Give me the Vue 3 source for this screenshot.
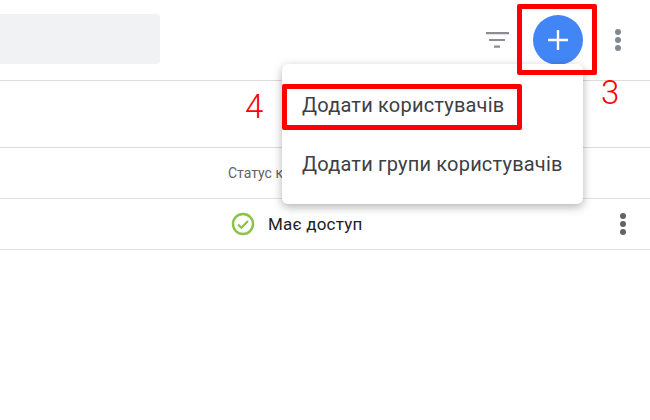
<script setup>
const menuItems = ['Додати користувачів', 'Додати групи користувачів']
</script>

<template>
  <div class="page">
    <header class="toolbar">
      <div class="search"></div>
      <div class="actions">
        <svg class="filter" width="24" height="16" viewBox="0 0 24 16">
          <path d="M0 1.2h23M3 8h16M8 14.6h6" stroke="#8a8d91" stroke-width="2.2" fill="none" />
        </svg>
        <button class="add">
          <svg width="22" height="22" viewBox="0 0 22 22">
            <path d="M11 1v20M1 11h20" stroke="#fff" stroke-width="2.4" fill="none" />
          </svg>
        </button>
        <div class="dots"><i></i><i></i><i></i></div>
      </div>
    </header>
    <div class="band"></div>
    <div class="thead"><span class="th">Статус к</span></div>
    <div class="row">
      <span class="status">
        <svg width="24" height="24" viewBox="0 0 24 24">
          <circle cx="12" cy="12" r="10" stroke="#8bc34a" stroke-width="2.4" fill="none" />
          <path d="M7 12.5l3.4 3.3 6.6-6.8" stroke="#8bc34a" stroke-width="2.2" fill="none" />
        </svg>
        Має доступ
      </span>
      <div class="dots dark"><i></i><i></i><i></i></div>
    </div>

    <ul class="menu">
      <li v-for="item in menuItems" :key="item">{{ item }}</li>
    </ul>

    <div class="mark mark-add"></div>
    <div class="mark mark-item"></div>
    <span class="num num-3">3</span>
    <span class="num num-4">4</span>
  </div>
</template>

<style>
html, body { margin: 0; background: #fff; }
</style>

<style scoped>
.page {
  position: relative;
  width: 650px;
  height: 420px;
  overflow: hidden;
  background: #fff;
  font-family: Roboto, "Noto Sans", sans-serif;
}
.toolbar {
  box-sizing: border-box;
  height: 81px;
  padding-top: 14px;
  display: flex;
  justify-content: space-between;
  align-items: flex-start;
  border-bottom: 1px solid #dcdbe0;
}
.search {
  width: 160px;
  height: 50px;
  background: #f1f2f4;
  border-radius: 0 3px 3px 0;
}
.actions {
  display: flex;
  align-items: center;
  height: 50px;
  margin-top: 1px;
  padding-right: 29px;
}
.filter { margin-right: 23px; }
.add {
  width: 50px;
  height: 50px;
  padding: 0;
  border: 0;
  border-radius: 50%;
  background: #4285f4;
  display: flex;
  align-items: center;
  justify-content: center;
  margin-right: 32px;
}
.dots {
  display: flex;
  flex-direction: column;
  gap: 2px;
}
.dots i {
  width: 6px;
  height: 6px;
  border-radius: 50%;
  background: #7f8a93;
}
.dots.dark i { background: #5f6368; }
.band {
  height: 66px;
  border-bottom: 1px solid #dcdbe0;
}
.thead {
  box-sizing: border-box;
  height: 51px;
  padding: 17px 0 0 228px;
  border-bottom: 1px solid #e0e0e0;
}
.th {
  display: block;
  font-size: 14px;
  color: #5f6368;
  white-space: nowrap;
}
.row {
  box-sizing: border-box;
  height: 51px;
  padding: 0 24px 0 231px;
  display: flex;
  align-items: center;
  justify-content: space-between;
  border-bottom: 1px solid #e0e0e0;
}
.status {
  display: flex;
  align-items: center;
  gap: 13px;
  font-size: 17px;
  letter-spacing: 0.2px;
  color: #202124;
}
.menu {
  position: absolute;
  left: 282px;
  top: 64px;
  width: 301px;
  height: 140px;
  margin: 0;
  padding: 12px 0;
  box-sizing: border-box;
  list-style: none;
  background: #fff;
  border-radius: 6px;
  box-shadow: 0 3px 10px rgba(0, 0, 0, 0.3);
}
.menu li {
  height: 59px;
  padding-left: 20px;
  line-height: 58px;
  font-size: 20px;
  letter-spacing: 0.2px;
  color: #3c4043;
  white-space: nowrap;
}
.mark {
  position: absolute;
  box-sizing: border-box;
  border: 5px solid #fe0000;
  border-radius: 2px;
}
.mark-add { left: 517px; top: 4px; width: 80px; height: 71px; }
.mark-item { left: 282px; top: 84px; width: 240px; height: 46px; }
.num {
  position: absolute;
  font-family: Roboto, sans-serif;
  font-weight: 300;
  font-size: 33px;
  line-height: 36px;
  color: #fe0000;
}
.num-3 { left: 601px; top: 75px; }
.num-4 { left: 245px; top: 89px; }
</style>
